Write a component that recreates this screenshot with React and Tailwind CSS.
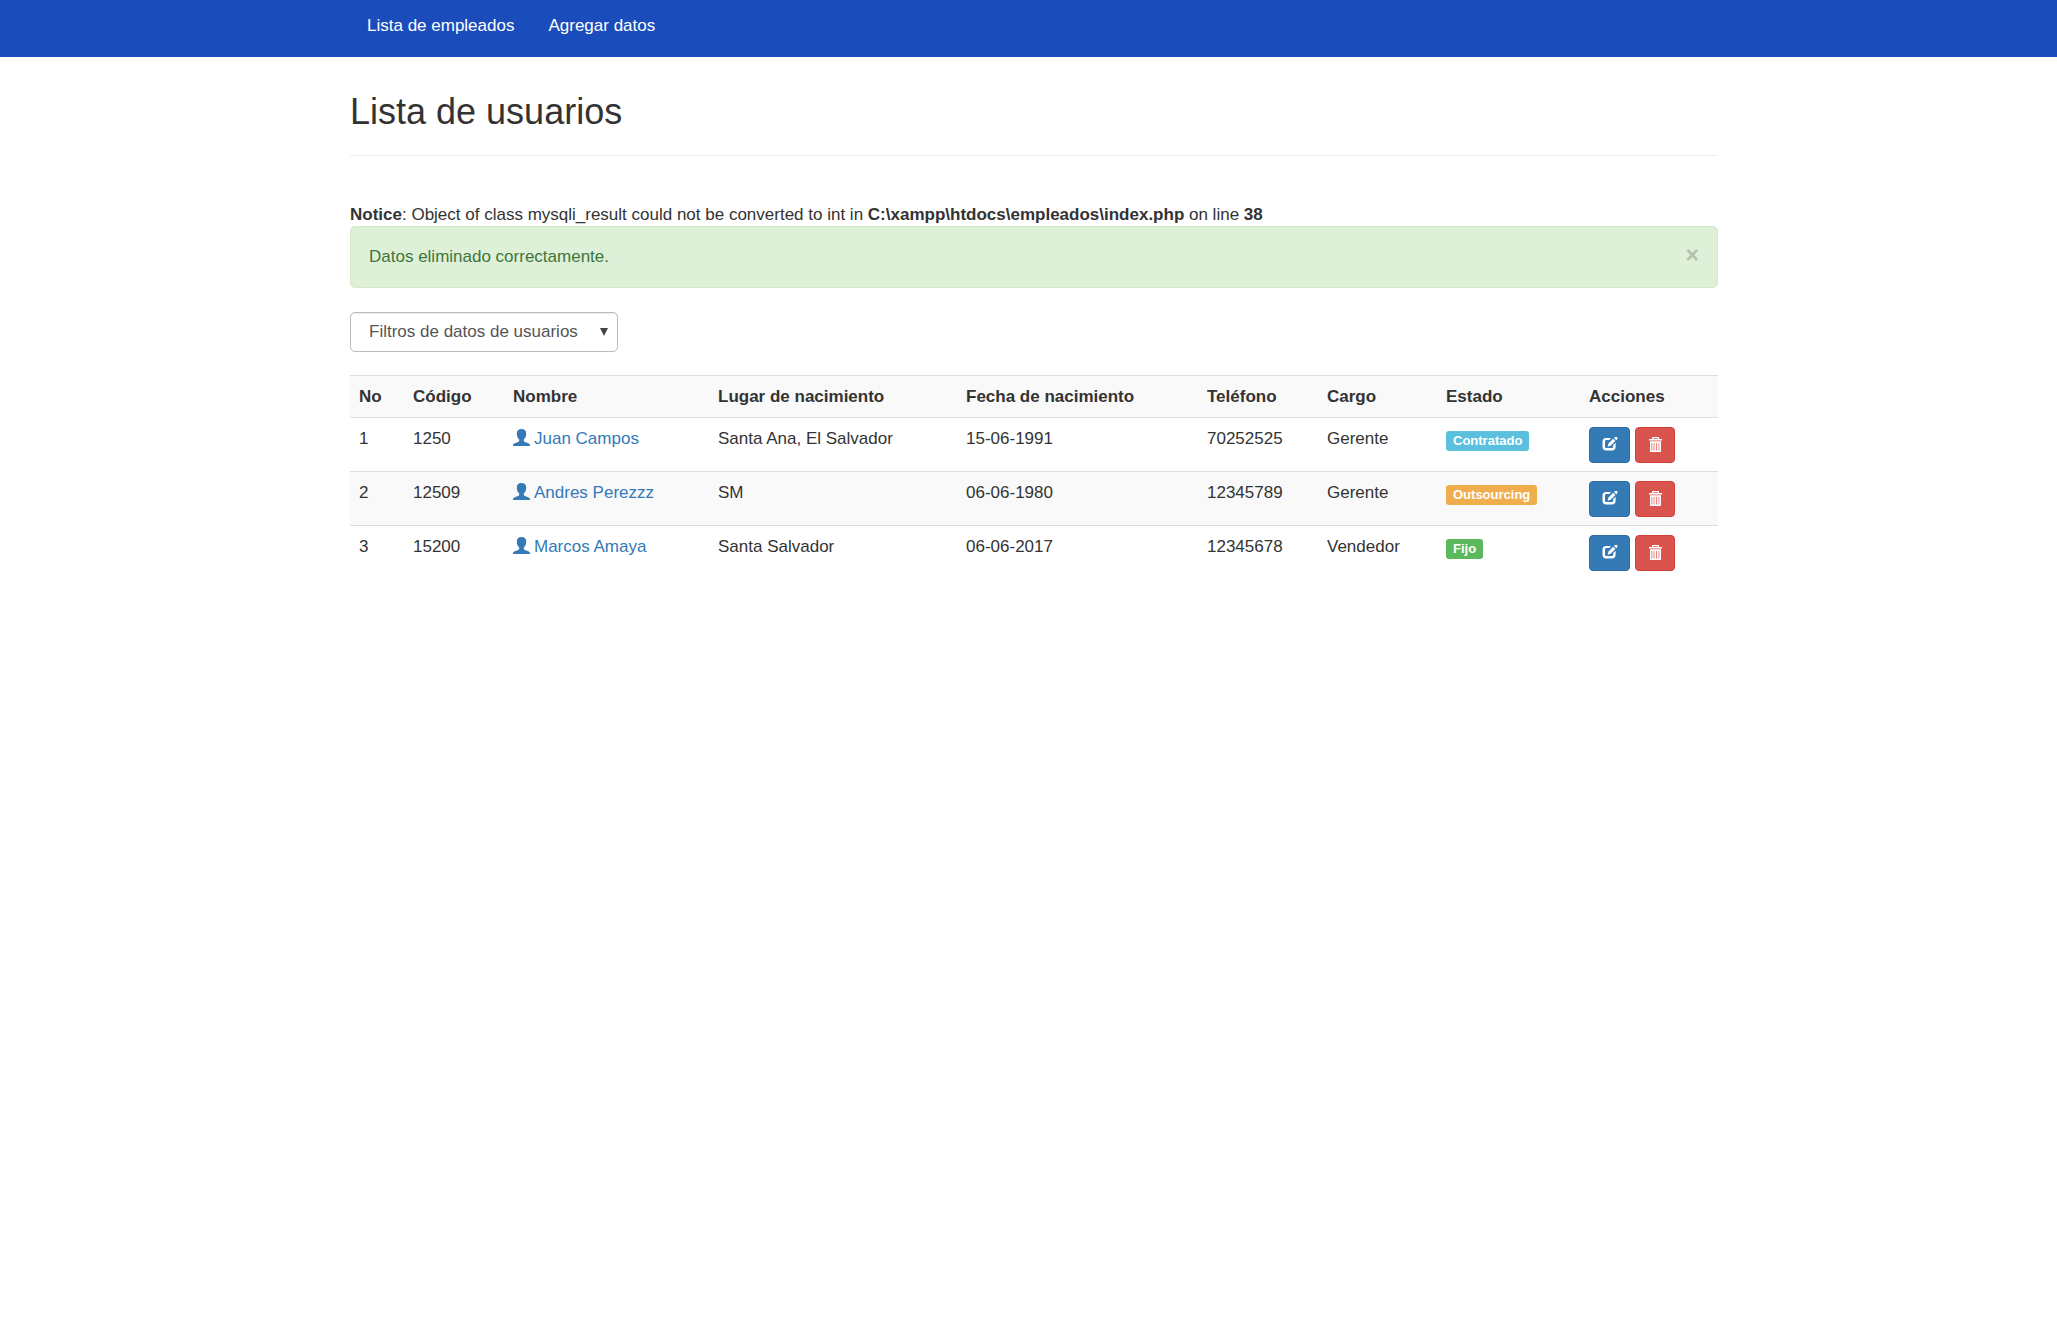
import React from "react";

const employees = [
  { no: 1, code: "1250", name: "Juan Campos", place: "Santa Ana, El Salvador", date: "15-06-1991", phone: "70252525", role: "Gerente", status: "Contratado", badge: "bg-[#5bc0de]" },
  { no: 2, code: "12509", name: "Andres Perezzz", place: "SM", date: "06-06-1980", phone: "12345789", role: "Gerente", status: "Outsourcing", badge: "bg-[#f0ad4e]" },
  { no: 3, code: "15200", name: "Marcos Amaya", place: "Santa Salvador", date: "06-06-2017", phone: "12345678", role: "Vendedor", status: "Fijo", badge: "bg-[#5cb85c]" },
];

const columns = [
  { label: "No", width: "w-[54px]" },
  { label: "Código", width: "w-[100px]" },
  { label: "Nombre", width: "w-[205px]" },
  { label: "Lugar de nacimiento", width: "w-[248px]" },
  { label: "Fecha de nacimiento", width: "w-[241px]" },
  { label: "Teléfono", width: "w-[120px]" },
  { label: "Cargo", width: "w-[119px]" },
  { label: "Estado", width: "w-[143px]" },
  { label: "Acciones", width: "w-[138px]" },
];

function UserIcon() {
  return (
    <svg viewBox="0 0 17 17" className="mt-0.5 size-[17px] shrink-0" fill="currentColor" aria-hidden="true">
      <path d="M8.500 0C11.600 0 13.200 1.800 13.200 4.400c0 1.900-.5 3.400-1.200 4.700-.4.700-.9 1.200-1.200 1.500v1.200c0 .4.200.7.600.9l4.300 1.800c.8.300 1.300 1 1.300 1.700V17H0v-.8c0-.7.500-1.400 1.300-1.700l4.300-1.800c.4-.2.600-.5.600-.9v-1.200c-.3-.3-.8-.8-1.200-1.500C4.300 7.800 3.800 6.300 3.800 4.400 3.800 1.800 5.400 0 8.500 0z" />
    </svg>
  );
}

function EditIcon() {
  return (
    <svg viewBox="0 0 16 14" className="h-[14px] w-4" fill="currentColor" aria-hidden="true">
      <path d="M4 .9H9.200L7.200 3.100H4.600c-1 0-1.600.6-1.600 1.600v4.700c0 1 .6 1.600 1.600 1.600h5c1 0 1.600-.6 1.600-1.600V8.100L13.600 5.700v4.400c0 2.100-1.400 3.500-3.500 3.500H4C1.900 13.600.5 12.200.5 10.100V4.400C.5 2.300 1.900.9 4 .9z" />
      <path d="M11.200 1.700l2.200 2.200-4.800 4.800-3 1 .9-3.200z" />
      <path d="M12 1l1-.9h2.400V2.200L14.300 3.200z" />
    </svg>
  );
}

function TrashIcon() {
  return (
    <svg viewBox="0 0 13 15" className="h-[15px] w-[13px]" fill="currentColor" aria-hidden="true">
      <path d="M4 0h5c.6 0 1 .4 1 1v1h3v1.500H0V2h3V1c0-.6.400-1 1-1zM4.200 1.200V2h4.600v-.8z" fillRule="evenodd" />
      <path d="M1 4.300h11V14c0 .6-.4 1-1 1H2c-.6 0-1-.4-1-1zM2.500 6v7.500h.7V6zM4.700 6v7.500h.7V6zM7.300 6v7.500h.7V6zM9.600 6v7.500h.7V6z" fillRule="evenodd" />
    </svg>
  );
}

export default function App() {
  return (
    <div className="min-h-screen bg-white font-['Liberation_Sans',Arial,sans-serif] text-[17px] leading-6 text-[#333]">
      <nav className="h-[57px] bg-[#1a4dbb] pl-[11px]">
        <ul className="mx-auto flex max-w-[1368px]">
          <li><a href="#lista" className="block px-[17px] py-[14px] text-white">Lista de empleados</a></li>
          <li><a href="#agregar" className="block px-[17px] py-[14px] text-white">Agregar datos</a></li>
        </ul>
      </nav>

      <main className="pl-[11px]">
        <div className="mx-auto max-w-[1368px]">
          <h2 className="pt-[35px] text-[36px] leading-10">Lista de usuarios</h2>
          <hr className="mt-[23px] border-[#eee]" />

          <p className="pt-[47px] leading-[23px]">
            <b>Notice</b>: Object of class mysqli_result could not be converted to int in{" "}
            <b>C:\xampp\htdocs\empleados\index.php</b> on line <b>38</b>
          </p>

          <div role="alert" className="flex h-[62px] items-start justify-between rounded-[5px] border border-[#d6e9c6] bg-[#dff0d8] px-[18px] pt-[18px] text-[#3c763d]">
            <span>Datos eliminado correctamente.</span>
            <button type="button" aria-label="Cerrar" className="text-[23px] font-bold leading-5 text-black opacity-20">×</button>
          </div>

          <form className="mt-6">
            <div className="relative w-[268px]">
              <select
                aria-label="Filtros de datos de usuarios"
                className="h-10 w-full appearance-none rounded-[5px] border border-[#bbb] bg-white pl-[18px] text-[#555] shadow-[inset_0_1px_1px_rgba(0,0,0,0.075)]"
              >
                <option>Filtros de datos de usuarios</option>
                <option>Fijo</option>
                <option>Contratado</option>
                <option>Outsourcing</option>
              </select>
              <svg viewBox="0 0 8 8" className="pointer-events-none absolute right-[10px] top-4 size-2" fill="#444" aria-hidden="true">
                <path d="M0 0h8L4 8z" />
              </svg>
            </div>
          </form>

          <table className="mt-[23px] w-full table-fixed border-collapse text-left">
            <thead>
              <tr className="h-[42px] border-y border-[#ddd] bg-[#f9f9f9]">
                {columns.map((c) => (
                  <th key={c.label} scope="col" className={`${c.width} px-[9px] font-bold`}>{c.label}</th>
                ))}
              </tr>
            </thead>
            <tbody>
              {employees.map((e) => (
                <tr key={e.no} className="h-[54px] border-t border-[#ddd] align-top even:bg-[#f9f9f9]">
                  <td className="px-[9px] pt-[9px]">{e.no}</td>
                  <td className="px-[9px] pt-[9px]">{e.code}</td>
                  <td className="px-[9px] pt-[9px]">
                    <a href={`#${e.code}`} className="flex items-start gap-1 text-[#337ab7]">
                      <UserIcon />
                      {e.name}
                    </a>
                  </td>
                  <td className="px-[9px] pt-[9px]">{e.place}</td>
                  <td className="px-[9px] pt-[9px]">{e.date}</td>
                  <td className="px-[9px] pt-[9px]">{e.phone}</td>
                  <td className="px-[9px] pt-[9px]">{e.role}</td>
                  <td className="px-[9px] pt-[13px]">
                    <span className={`block w-fit rounded-[3px] px-[7px] text-[13px] font-bold leading-5 text-white ${e.badge}`}>{e.status}</span>
                  </td>
                  <td className="px-[9px] pt-[9px]">
                    <div className="flex gap-[5px]">
                      <button type="button" aria-label={`Editar ${e.name}`} className="flex h-9 w-[41px] items-center justify-center rounded border border-[#2e6da4] bg-[#337ab7] pb-0.5 text-white">
                        <EditIcon />
                      </button>
                      <button type="button" aria-label={`Eliminar ${e.name}`} className="flex h-9 w-10 items-center justify-center rounded border border-[#d43f3a] bg-[#d9534f] pb-0.5 text-white">
                        <TrashIcon />
                      </button>
                    </div>
                  </td>
                </tr>
              ))}
            </tbody>
          </table>
        </div>
      </main>
    </div>
  );
}
